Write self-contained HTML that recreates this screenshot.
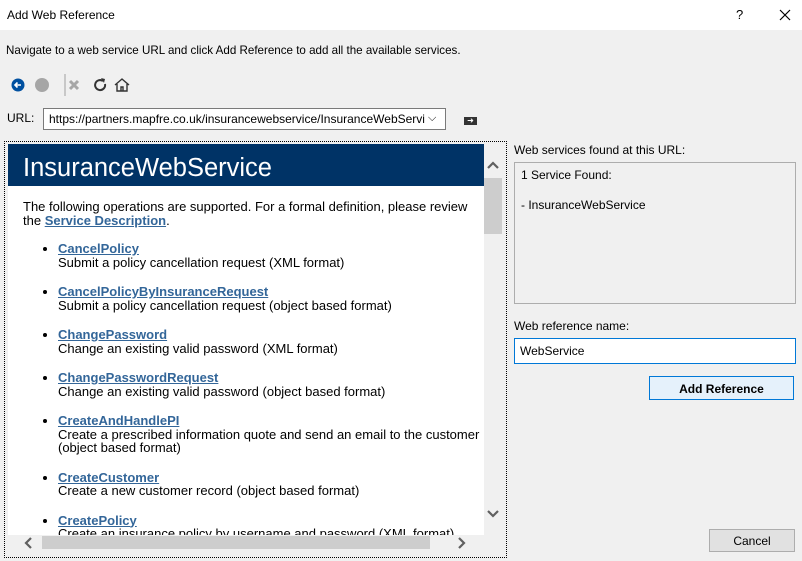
<!DOCTYPE html>
<html><head><style>
*{margin:0;padding:0;box-sizing:border-box}
body{width:802px;height:561px;background:#f0f0f0;font-family:"Liberation Sans",sans-serif;font-size:12px;color:#000;position:relative;overflow:hidden}
.a{position:absolute;white-space:nowrap}
#title{left:0;top:0;width:802px;height:30px;background:#fff}
a{color:#336699;font-weight:bold;text-decoration:underline}
li{margin-bottom:16px}
</style></head><body>
<div class="a" id="title"></div>
<div class="a" style="left:7px;top:8px">Add Web Reference</div>
<div class="a" style="left:736px;top:7px;font-size:13px">?</div>
<svg class="a" style="left:779px;top:9px" width="12" height="12"><path d="M1 1l10 10M11 1L1 11" stroke="#000" stroke-width="1.2"/></svg>
<div class="a" style="left:6px;top:44px;font-size:11.6px">Navigate to a web service URL and click Add Reference to add all the available services.</div>
<svg class="a" style="left:8px;top:74px" width="130" height="22">
<circle cx="10" cy="11" r="6.5" fill="#0050a0"/><path d="M13 11H7M9.5 8.5L7 11l2.5 2.5" stroke="#fff" stroke-width="1.6" fill="none"/>
<circle cx="34" cy="11" r="7" fill="#a6a6a6"/>
<line x1="57" y1="0" x2="57" y2="22" stroke="#a0a0a0"/>
<path d="M62 7l8 8M70 7l-8 8" stroke="#a6a6a6" stroke-width="3"/>
<path d="M95 7a5 5 0 1 0 2 3" stroke="#333" stroke-width="2" fill="none"/><path d="M93 4l4 1-1 4z" fill="#333"/>
<path d="M107 11l7-6 7 6M109 10v7h10v-7M113 17v-4h2v4" stroke="#333" stroke-width="1.4" fill="none"/>
</svg>
<div class="a" style="left:7px;top:111px">URL:</div>
<div class="a" style="left:43px;top:108px;width:403px;height:22px;background:#fff;border:1px solid #7a7a7a;padding:3px 5px;overflow:hidden">https://partners.mapfre.co.uk/insurancewebservice/InsuranceWebServi</div>
<div class="a" style="left:428px;top:109px;width:17px;height:20px;background:#fff;font-size:11px;padding-top:3px">⌵</div>
<div class="a" style="left:464px;top:117px;width:13px;height:8px;background:#333;color:#fff;font-size:8px;line-height:8px;text-align:center">➜</div>
<div class="a" style="left:4px;top:141px;width:503px;height:417px;border:1px dotted #000"></div>
<div class="a" style="left:8px;top:144px;width:494px;height:409px;background:#fff;overflow:hidden">
 <div class="a" style="left:0;top:0;width:476px;height:42px;background:#003366;color:#fff;font-size:25.5px;padding:10px 15px">InsuranceWebService</div>
 <div class="a" style="left:15px;top:56px;white-space:normal;width:462px;font-size:13px;line-height:13.5px">The following operations are supported. For a formal definition, please review the <a>Service Description</a>.</div>
 <ul class="a" style="left:34px;top:98px;font-size:13px;line-height:13.5px;white-space:nowrap;padding-left:16px">
 <li><a>CancelPolicy</a><br>Submit a policy cancellation request (XML format)</li>
 <li><a>CancelPolicyByInsuranceRequest</a><br>Submit a policy cancellation request (object based format)</li>
 <li><a>ChangePassword</a><br>Change an existing valid password (XML format)</li>
 <li><a>ChangePasswordRequest</a><br>Change an existing valid password (object based format)</li>
 <li><a>CreateAndHandlePI</a><br>Create a prescribed information quote and send an email to the customer<br>(object based format)</li>
 <li><a>CreateCustomer</a><br>Create a new customer record (object based format)</li>
 <li><a>CreatePolicy</a><br>Create an insurance policy by username and password (XML format)</li>
 </ul>
 <div class="a" style="left:476px;top:0;width:18px;height:391px;background:#f0f0f0"></div>
 <div class="a" style="left:476px;top:34px;width:18px;height:56px;background:#cdcdcd"></div>
 <svg class="a" style="left:476px;top:12px" width="18" height="18"><path d="M4 12l5-5 5 5" stroke="#606060" stroke-width="2.2" fill="none"/></svg>
 <svg class="a" style="left:476px;top:361px" width="18" height="18"><path d="M4 6l5 5 5-5" stroke="#606060" stroke-width="2.2" fill="none"/></svg>
 <div class="a" style="left:0;top:391px;width:494px;height:18px;background:#f0f0f0"></div>
 <div class="a" style="left:34px;top:392px;width:388px;height:13px;background:#cdcdcd"></div>
 <svg class="a" style="left:14px;top:391px" width="14" height="16"><path d="M9 3l-5 5 5 5" stroke="#606060" stroke-width="2.2" fill="none"/></svg>
 <svg class="a" style="left:446px;top:391px" width="14" height="16"><path d="M5 3l5 5-5 5" stroke="#606060" stroke-width="2.2" fill="none"/></svg>
</div>
<div class="a" style="left:514px;top:143px">Web services found at this URL:</div>
<div class="a" style="left:514px;top:162px;width:282px;height:142px;border:1px solid #adadad;background:#f0f0f0;padding:5px 6px;line-height:15px">1 Service Found:<br><br>- InsuranceWebService</div>
<div class="a" style="left:514px;top:319px">Web reference name:</div>
<div class="a" style="left:514px;top:338px;width:282px;height:26px;border:1px solid #0078d7;background:#fff;padding:5px 5px">WebService</div>
<div class="a" style="left:649px;top:376px;width:145px;height:24px;border:1px solid #0078d7;background:#e5f1fb;text-align:center;font-weight:bold;padding-top:5px">Add Reference</div>
<div class="a" style="left:709px;top:529px;width:86px;height:23px;border:1px solid #adadad;background:#e1e1e1;text-align:center;padding-top:4px">Cancel</div>
</body></html>
